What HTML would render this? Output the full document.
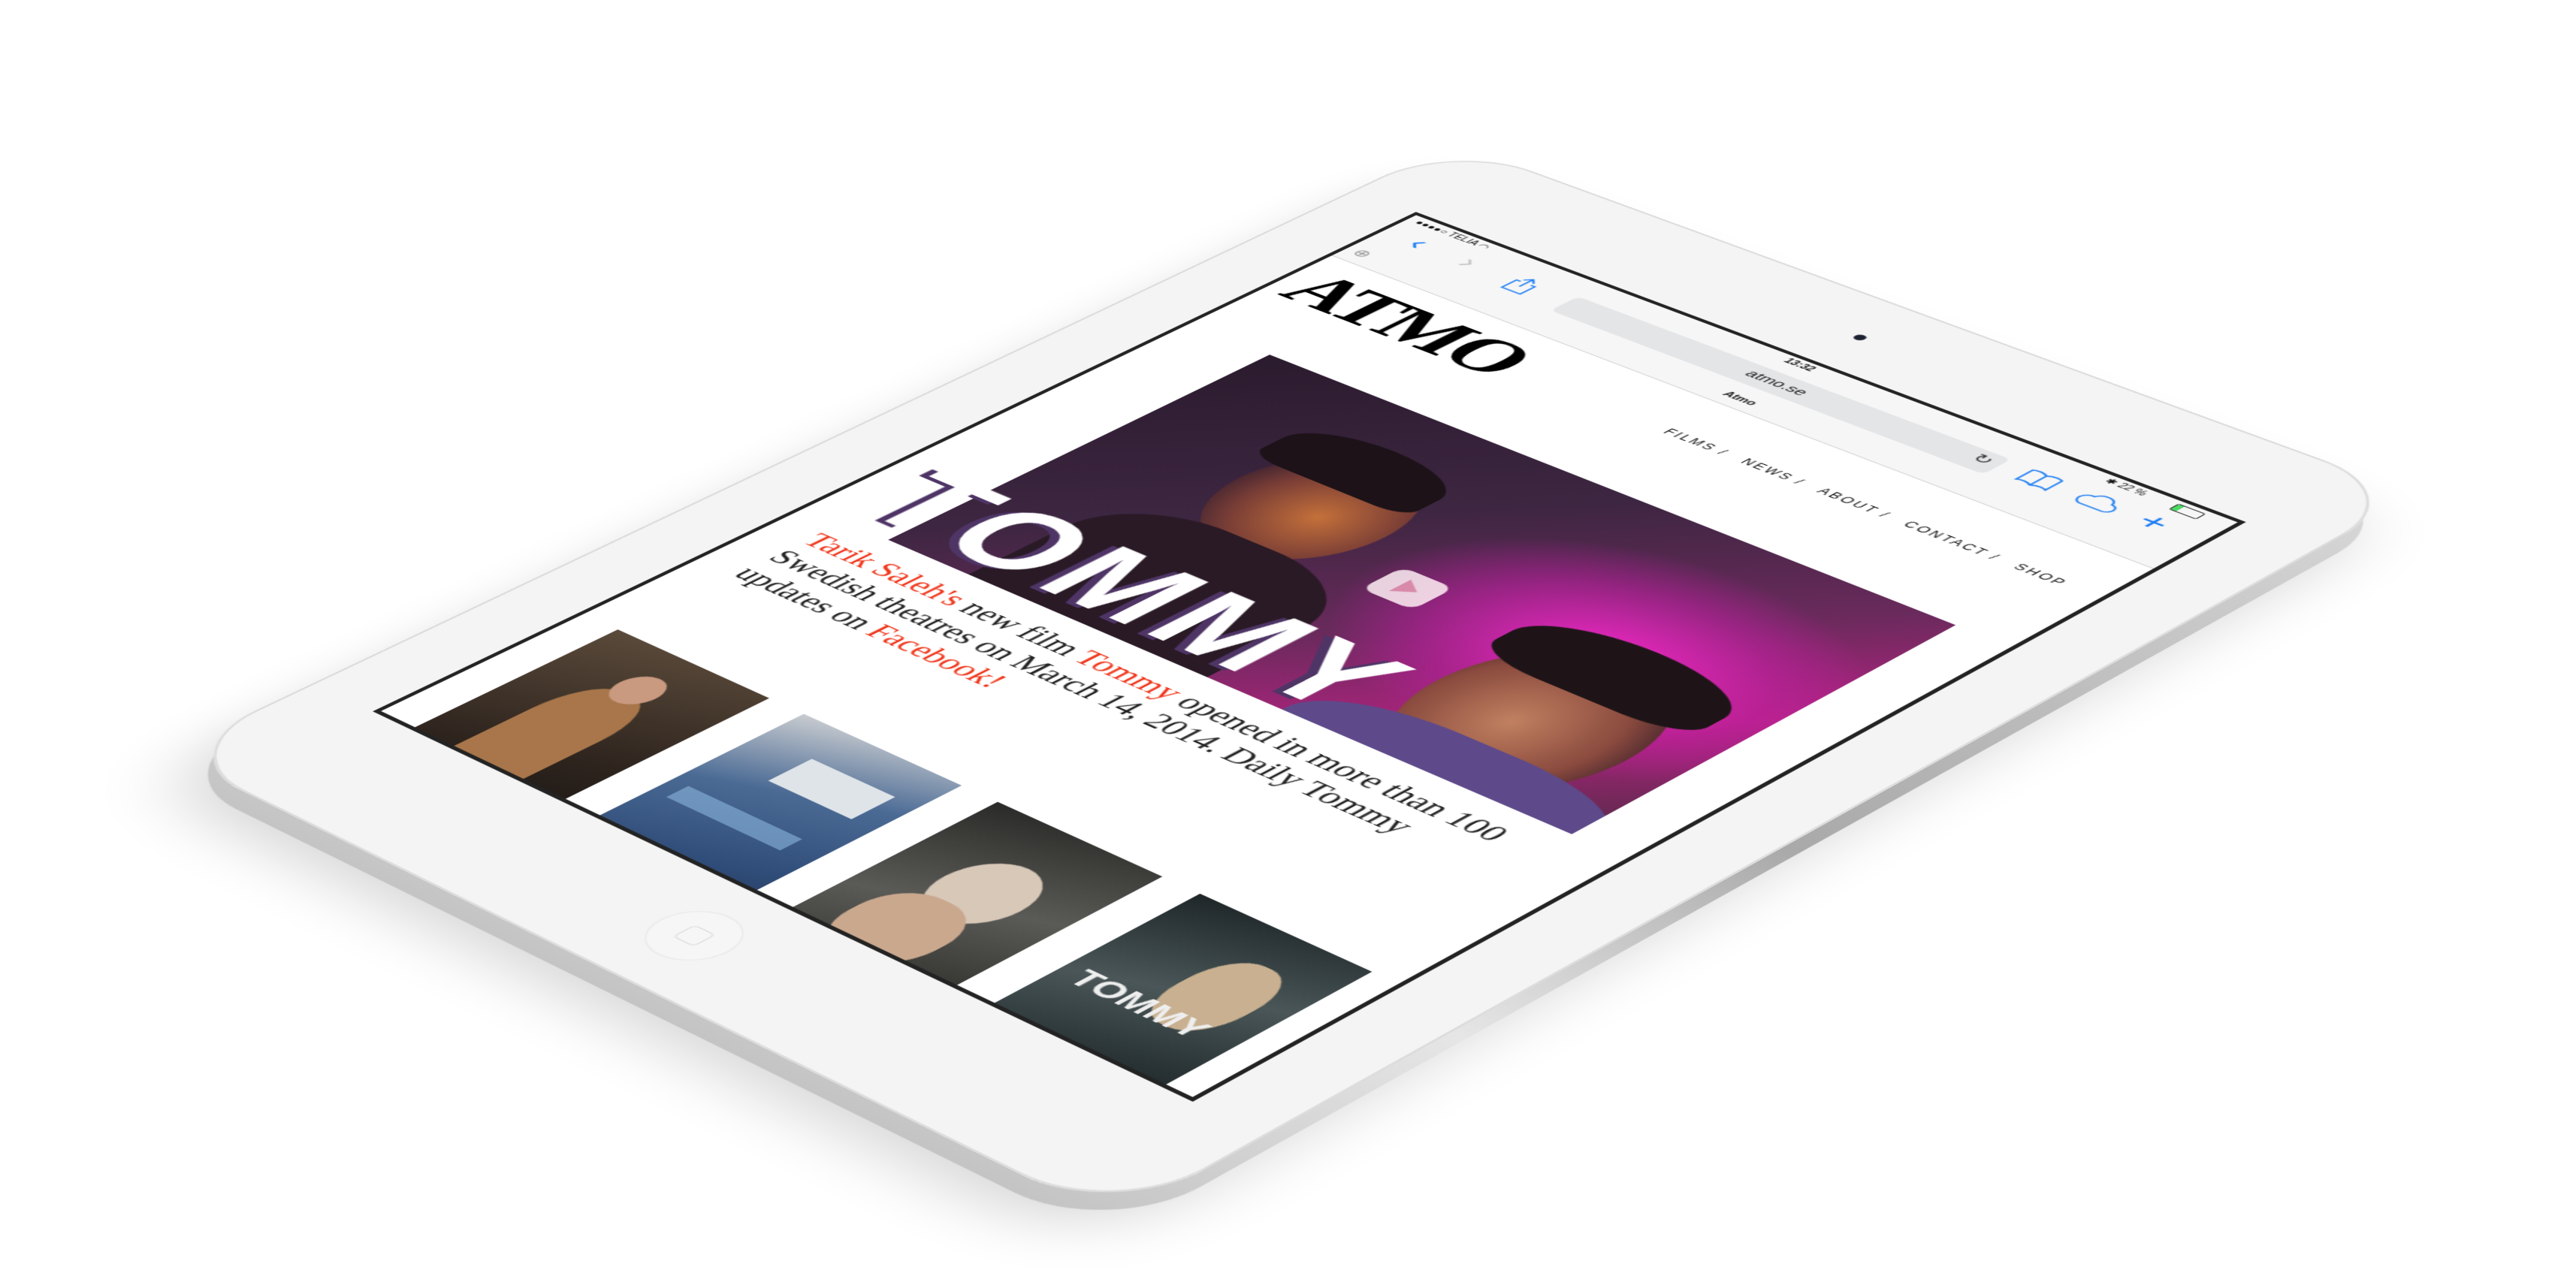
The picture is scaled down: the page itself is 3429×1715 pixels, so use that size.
<!DOCTYPE html>
<html><head><meta charset="utf-8"><style>
html,body{margin:0;padding:0;}
body{width:3429px;height:1715px;overflow:hidden;background:#fff;position:relative;font-family:"Liberation Sans",sans-serif;}
.proj{position:absolute;left:0;top:0;width:768px;height:1024px;transform-origin:0 0;
transform:matrix3d(1.1216,0.4619,0,-0.00010147,-1.3893,0.5633,0,-0.00008612,0,0,1,0,1885.1,286.5,0,1);}
.abs{position:absolute;}
.body{left:-66px;top:-112px;width:900px;height:1272px;border-radius:80px;background:#f4f4f4;box-shadow:inset 0 0 0 2px #dcdcdc;}
.edge{left:-66px;top:-112px;width:900px;height:1272px;border-radius:80px;background:linear-gradient(180deg,#d8d8d8,#a9a9a9 50%,#e6e6e6 75%,#c4c4c4);box-shadow:0 20px 60px rgba(0,0,0,.16);}
.screen{left:-4px;top:-4px;width:768px;height:1024px;border:4px solid #232323;background:#fff;overflow:hidden;}
.bar{left:0;top:0;width:768px;height:90px;background:#f6f6f6;border-bottom:1px solid #d4d4d4;}
.blue{color:#1a7cf5;}
</style></head><body>

<div class="proj" style="transform:translate(-8px,24px) matrix3d(1.1216,0.4619,0,-0.00010147,-1.3893,0.5633,0,-0.00008612,0,0,1,0,1885.1,286.5,0,1);">
  <div class="abs edge"></div>
</div>

<div class="proj">
  <div class="abs body"></div>
  <div class="abs" style="left:380px;top:-58px;width:9px;height:9px;border-radius:50%;background:#1c2230;"></div>
  <div class="abs" style="left:354px;top:1060px;width:62px;height:62px;border-radius:50%;border:1px solid #e6e6e6;background:#f6f6f6;"></div>
  <div class="abs" style="left:376px;top:1082px;width:18px;height:18px;border-radius:4px;border:1px solid #dcdcdc;"></div>

  <div class="abs screen">
    <div class="abs bar"></div>
    <div class="abs" style="left:8px;top:3px;font-size:10px;color:#111;">●●●●○ TELIA ◠</div>
    <div class="abs" style="left:368px;top:3px;font-size:10px;color:#111;font-weight:bold;">13:32</div>
    <div class="abs" style="left:660px;top:3px;font-size:10px;color:#111;">✱ 22 %</div>
    <div class="abs" style="left:720px;top:4px;width:22px;height:9px;border:1px solid #333;border-radius:2px;"><div style="width:5px;height:9px;background:#4cd964;"></div></div>
    <div class="abs blue" style="left:30px;top:20px;font-size:30px;line-height:30px;">‹</div>
    <div class="abs" style="left:80px;top:20px;font-size:30px;line-height:30px;color:#c6c6c6;">›</div>
    <svg class="abs" style="left:128px;top:24px" width="26" height="28" viewBox="0 0 26 28"><path d="M8 10H4v16h18V10h-4M13 17V2M8 7l5-5 5 5" fill="none" stroke="#1a7cf5" stroke-width="1.6"/></svg>
    <div class="abs" style="left:185px;top:26px;width:405px;height:30px;border-radius:6px;background:#e4e5e7;"></div>
    <div class="abs" style="left:185px;top:32px;width:405px;text-align:center;font-size:15px;color:#222;">atmo.se</div>
    <div class="abs" style="left:568px;top:29px;font-size:17px;color:#333;">↻</div>
    <svg class="abs" style="left:610px;top:26px" width="30" height="24" viewBox="0 0 30 24"><path d="M15 4C11 1 5 1 2 3v18c3-2 9-2 13 1 4-3 10-3 13-1V3c-3-2-9-2-13 1zM15 4v18" fill="none" stroke="#1a7cf5" stroke-width="1.6"/></svg>
    <svg class="abs" style="left:660px;top:27px" width="34" height="22" viewBox="0 0 34 22"><path d="M8 20h19a6 6 0 0 0 0-12 9 9 0 0 0-17-2A7 7 0 0 0 8 20z" fill="none" stroke="#1a7cf5" stroke-width="1.6"/></svg>
    <div class="abs blue" style="left:715px;top:18px;font-size:34px;font-weight:300;">+</div>
    <div class="abs" style="left:8px;top:64px;font-size:16px;color:#999;">⊕</div>
    <div class="abs" style="left:0;top:70px;width:768px;text-align:center;font-size:11px;font-weight:bold;color:#222;">Atmo</div>

    <div class="abs" style="left:14px;top:100px;font-family:'Liberation Serif',serif;font-weight:bold;font-size:74px;letter-spacing:-3px;color:#000;line-height:80px;">ATMO</div>
    <div class="abs" style="left:378px;top:140px;font-size:12px;letter-spacing:2px;color:#111;white-space:nowrap;">FILMS /&nbsp;&nbsp; NEWS /&nbsp;&nbsp; ABOUT /&nbsp;&nbsp; CONTACT /&nbsp;&nbsp; SHOP</div>

    <div class="abs" style="left:80px;top:240px;width:640px;height:383px;overflow:hidden;background:linear-gradient(135deg,#2b1b2e 0%,#3d2641 35%,#6a2a5c 60%,#b0237f 80%,#5a2a4a 100%);">
      <div class="abs" style="left:280px;top:40px;width:420px;height:300px;background:radial-gradient(ellipse at center,rgba(255,40,210,.9),rgba(200,30,170,.5) 45%,rgba(0,0,0,0) 70%);"></div>
      <div class="abs" style="left:120px;top:70px;width:140px;height:170px;border-radius:50%;background:radial-gradient(ellipse at 60% 55%,#c4703a,#7a3e36 50%,#3a2030 80%);"></div>
      <div class="abs" style="left:100px;top:55px;width:150px;height:70px;border-radius:50% 50% 20% 20%;background:#1c1218;"></div>
      <div class="abs" style="left:80px;top:220px;width:230px;height:170px;border-radius:40% 40% 0 0;background:#2a1a26;"></div>
      <div class="abs" style="left:430px;top:180px;width:170px;height:210px;border-radius:50%;background:radial-gradient(ellipse at 45% 55%,#c08060,#8a4a3e 55%,#3a1e2a 85%);"></div>
      <div class="abs" style="left:420px;top:160px;width:190px;height:80px;border-radius:50% 50% 30% 30%;background:#1e1418;"></div>
      <div class="abs" style="left:380px;top:330px;width:280px;height:120px;border-radius:40% 40% 0 0;background:#5e4a8a;"></div>
      <div class="abs" style="left:300px;top:180px;width:48px;height:42px;border-radius:10px;background:rgba(255,240,245,.85);"></div>
      <div class="abs" style="left:317px;top:190px;width:0;height:0;border-left:16px solid #d88aa8;border-top:11px solid transparent;border-bottom:11px solid transparent;"></div>
    </div>
    <div class="abs" style="left:30px;top:505px;font-family:'Liberation Sans',sans-serif;font-weight:bold;font-size:118px;line-height:120px;letter-spacing:6px;color:#fff;text-shadow:-6px 4px 0 #4e3566;white-space:nowrap;">TOMMY</div>

    <div class="abs" style="left:36px;top:640px;width:760px;font-family:'Liberation Serif',serif;font-size:29px;line-height:33px;color:#222;white-space:nowrap;">
      <span style="color:#f0361a">Tarik Saleh's</span> new film <span style="color:#f0361a">Tommy</span> opened in more than 100<br>Swedish theatres on March 14, 2014. Daily Tommy<br>updates on <span style="color:#f0361a">Facebook!</span>
    </div>

    <div class="abs" style="left:35px;top:838px;width:152px;height:260px;background:linear-gradient(160deg,#5a4a3a,#2e241e 60%,#151210);">
      <div class="abs" style="left:40px;top:60px;width:70px;height:140px;border-radius:40% 40% 10% 10%;background:#a8764a;"></div>
      <div class="abs" style="left:58px;top:30px;width:36px;height:42px;border-radius:50%;background:#c99a80;"></div>
    </div>
    <div class="abs" style="left:221px;top:838px;width:152px;height:260px;background:linear-gradient(160deg,#c9ccd0,#4a6a94 35%,#2f4c78 70%,#1e2e4c);">
      <div class="abs" style="left:50px;top:40px;width:80px;height:40px;background:#dfe4e8;"></div>
      <div class="abs" style="left:15px;top:120px;width:110px;height:20px;background:#8cb8e0;opacity:.6;"></div>
    </div>
    <div class="abs" style="left:407px;top:838px;width:152px;height:260px;background:linear-gradient(160deg,#2a2a28,#5a5a56 45%,#3a3a36 75%,#1c1c1a);">
      <div class="abs" style="left:45px;top:50px;width:70px;height:85px;border-radius:50%;background:#d8c8b8;"></div>
      <div class="abs" style="left:30px;top:115px;width:80px;height:90px;border-radius:45%;background:#caa88e;"></div>
    </div>
    <div class="abs" style="left:593px;top:838px;width:152px;height:260px;background:linear-gradient(160deg,#1e2628,#4a5658 40%,#2a3436 70%,#101516);">
      <div class="abs" style="left:70px;top:40px;width:60px;height:95px;border-radius:45%;background:#c8b090;"></div>
      <div class="abs" style="left:14px;top:110px;font-weight:bold;font-size:30px;color:#eee;">TOMMY</div>
    </div>
  </div>
</div>
</body></html>
